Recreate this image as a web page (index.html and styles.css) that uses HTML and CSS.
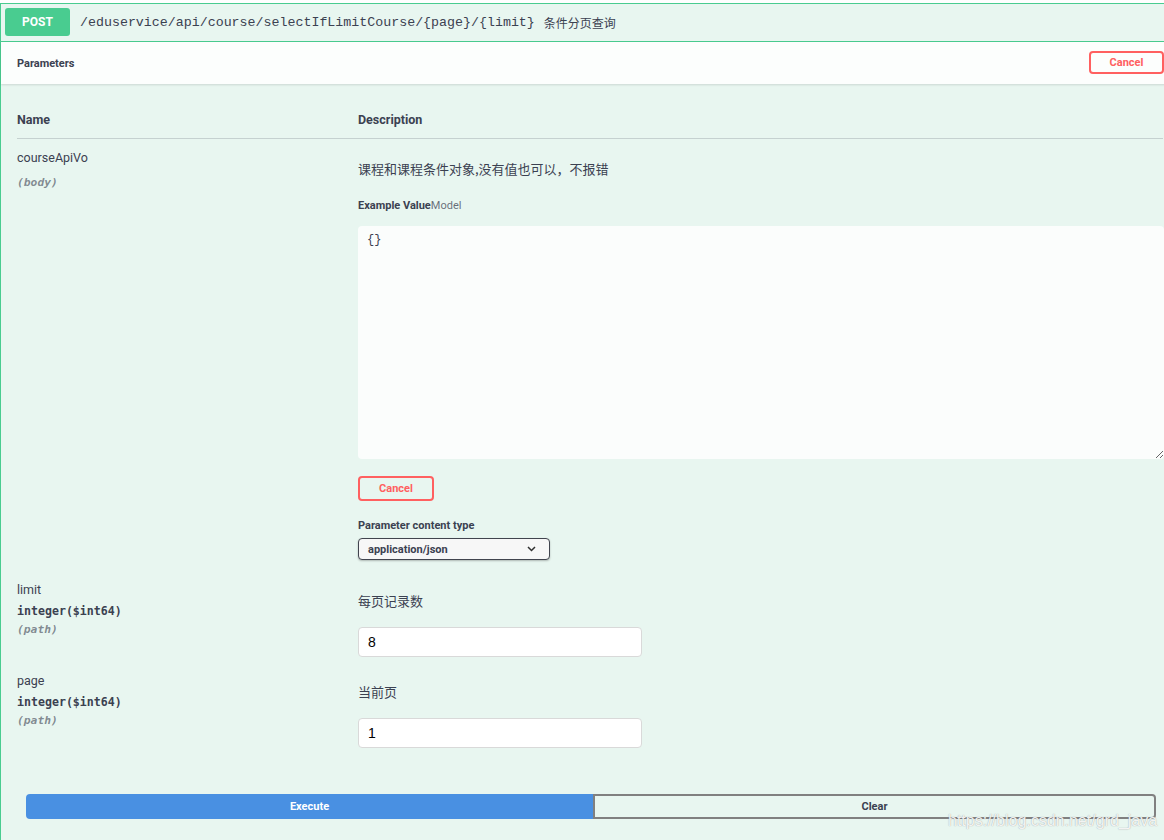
FILE: index.html
```html
<!DOCTYPE html>
<html lang="zh">
<head>
<meta charset="utf-8">
<title>Swagger</title>
<link rel="stylesheet" href="styles.css">
</head>
<body>
<div class="opblock">
  <div class="op-summary">
    <span class="method">POST</span>
    <span class="path">/eduservice/api/course/selectIfLimitCourse/{page}/{limit}</span>
    <span class="summary">条件分页查询</span>
  </div>
  <div class="section-header">
    <span class="section-title">Parameters</span>
    <button class="btn-cancel btn-cancel-top">Cancel</button>
  </div>
  <div class="table-container">
    <div class="params-head">
      <div class="th">Name</div>
      <div class="th">Description</div>
    </div>

    <div class="param-row">
      <div class="param-name-col">
        <div class="param-name">courseApiVo</div>
        <div class="param-type param-type-empty"></div>
        <div class="param-in">(body)</div>
      </div>
      <div class="param-desc-col">
        <p class="desc">课程和课程条件对象,没有值也可以，不报错</p>
        <div class="model-tabs"><span class="tab-active">Example Value</span><span class="tab">Model</span></div>
        <textarea class="body-param" spellcheck="false">{}</textarea>
        <button class="btn-cancel btn-cancel-body">Cancel</button>
        <div class="ct-label">Parameter content type</div>
        <div class="ct-select">
          <span>application/json</span>
          <svg class="chevron" width="9" height="6" viewBox="0 0 9 6"><path d="M1 1 L4.5 4.5 L8 1" fill="none" stroke="#303030" stroke-width="1.5"/></svg>
        </div>
      </div>
    </div>

    <div class="param-row">
      <div class="param-name-col">
        <div class="param-name">limit</div>
        <div class="param-type">integer<span class="fmt">($int64)</span></div>
        <div class="param-in">(path)</div>
      </div>
      <div class="param-desc-col">
        <p class="desc">每页记录数</p>
        <input class="text-input" type="text" value="8">
      </div>
    </div>

    <div class="param-row">
      <div class="param-name-col">
        <div class="param-name">page</div>
        <div class="param-type">integer<span class="fmt">($int64)</span></div>
        <div class="param-in">(path)</div>
      </div>
      <div class="param-desc-col">
        <p class="desc">当前页</p>
        <input class="text-input" type="text" value="1">
      </div>
    </div>
  </div>
  <div class="execute-wrapper">
    <button class="btn-execute">Execute</button>
    <button class="btn-clear">Clear</button>
  </div>
</div>
<div class="watermark">https://blog.csdn.net/grd_java</div>
</body>
</html>
```

FILE: styles.css
```css
html, body {
  margin: 0;
  padding: 0;
  background: #ffffff;
}
body {
  width: 1164px;
  height: 840px;
  overflow: hidden;
  position: relative;
  font-family: Roboto, "Noto Sans", "Noto Sans CJK SC", sans-serif;
  color: #3b4151;
}
.opblock {
  box-sizing: border-box;
  width: 1180px;
  height: 837px;
  margin-top: 3px;
  border: 1px solid #49cc90;
  border-bottom: none;
  background: #e8f6f0;
}
.op-summary {
  display: flex;
  align-items: center;
  padding: 4px 4px 5px 4px;
  border-bottom: 1px solid #49cc90;
}
.method {
  width: 65px;
  height: 28px;
  border-radius: 3px;
  background: #49cc90;
  color: #fff;
  font-weight: 700;
  font-size: 12px;
  display: flex;
  align-items: center;
  justify-content: center;
}
.path {
  margin-left: 10px;
  font-family: "Liberation Mono", "DejaVu Sans Mono", monospace;
  font-size: 13.3px;
  color: #3b4151;
}
.summary {
  margin-left: 9px;
  font-family: "Noto Sans CJK SC", sans-serif;
  font-size: 12px;
  color: #3b4151;
}
.section-header {
  height: 42px;
  box-sizing: border-box;
  padding: 0 15px 0 16px;
  display: flex;
  align-items: center;
  justify-content: space-between;
  background: rgba(255, 255, 255, 0.85);
  box-shadow: 0 1px 2px rgba(0, 0, 0, 0.12);
  position: relative;
}
.section-title {
  font-size: 11px;
  font-weight: 700;
}
.btn-cancel {
  box-sizing: border-box;
  border: 2px solid #ff6060;
  border-radius: 4px;
  background: transparent;
  color: #ff6060;
  font-family: Roboto, sans-serif;
  font-weight: 700;
  font-size: 11px;
  padding: 0;
  display: block;
}
.btn-cancel-top {
  width: 75px;
  height: 23px;
  margin-top: -1px;
}
.table-container {
  padding: 20px 16px 0 16px;
}
.params-head {
  display: grid;
  grid-template-columns: 341px 1fr;
  border-bottom: 1px solid rgba(59, 65, 81, 0.2);
}
.th {
  padding: 9px 0 11px;
  line-height: 14px;
  font-size: 12.5px;
  font-weight: 700;
}
.param-row {
  display: grid;
  grid-template-columns: 341px 1fr;
  padding-top: 10px;
}
.param-name {
  font-size: 12.5px;
  line-height: 18px;
  color: #3b4151;
}
.param-type {
  margin-top: 2px;
  line-height: 20px;
  font-family: "DejaVu Sans Mono", "Liberation Mono", monospace;
  font-weight: 700;
  font-size: 11.6px;
}
.param-type-empty {
  height: 5px;
}
.param-in {
  line-height: 18px;
  font-family: "DejaVu Sans Mono", "Liberation Mono", monospace;
  font-style: italic;
  font-weight: 700;
  font-size: 11.3px;
  color: rgba(59, 65, 81, 0.6);
}
.desc {
  margin: 10px 0 0;
  line-height: 20px;
  font-size: 13px;
  font-family: "Noto Sans CJK SC", sans-serif;
}
.model-tabs {
  margin-top: 19px;
  line-height: 16px;
  font-size: 11px;
}
.tab-active {
  font-weight: 700;
}
.tab {
  color: rgba(59, 65, 81, 0.75);
}
.body-param {
  display: block;
  box-sizing: border-box;
  width: 806px;
  height: 233px;
  margin: 12px 0 0;
  padding: 6px 9px;
  border: none;
  border-radius: 4px;
  outline: none;
  background: rgba(255, 255, 255, 0.8);
  font-family: "Liberation Mono", "DejaVu Sans Mono", monospace;
  font-size: 12px;
  line-height: 16px;
  color: #3b4151;
}
.btn-cancel-body {
  width: 76px;
  height: 25px;
  margin-top: 17px;
}
.ct-label {
  margin-top: 18px;
  line-height: 14px;
  font-size: 11px;
  font-weight: 700;
}
.ct-select {
  box-sizing: border-box;
  width: 192px;
  height: 22px;
  margin-top: 5px;
  margin-bottom: 11px;
  padding: 0 13px 0 9px;
  border: 1px solid #41444e;
  border-radius: 4px;
  background: #f7f7f7;
  box-shadow: 0 1px 2px rgba(0, 0, 0, 0.25);
  display: flex;
  align-items: center;
  justify-content: space-between;
  font-size: 11px;
  font-weight: 700;
}
.text-input {
  display: block;
  box-sizing: border-box;
  width: 284px;
  height: 30px;
  margin: 16px 0 5px;
  padding: 0 9px;
  border: 1px solid #d9d9d9;
  border-radius: 4px;
  background: #fff;
  font-family: "Liberation Sans", Arial, sans-serif;
  font-size: 14px;
  color: #000;
  outline: none;
}
.execute-wrapper {
  display: flex;
  padding: 41px 23px 0 25px;
}
.btn-execute,
.btn-clear {
  height: 25px;
  box-sizing: border-box;
  font-family: Roboto, sans-serif;
  font-size: 11px;
  font-weight: 700;
  padding: 0;
}
.btn-execute {
  flex: 0 0 567px;
  background: #4990e2;
  color: #fff;
  border: none;
  border-radius: 4px 0 0 4px;
}
.btn-clear {
  flex: 1 1 auto;
  background: transparent;
  color: #3b4151;
  border: 2px solid #808080;
  border-radius: 0 4px 4px 0;
}
.watermark {
  position: absolute;
  left: 948px;
  top: 812px;
  font-family: "Liberation Sans", Arial, sans-serif;
  font-size: 16px;
  color: rgba(255, 255, 255, 0.9);
  text-shadow: 0 0 1px rgba(120, 120, 120, 0.8);
  white-space: nowrap;
}
```
